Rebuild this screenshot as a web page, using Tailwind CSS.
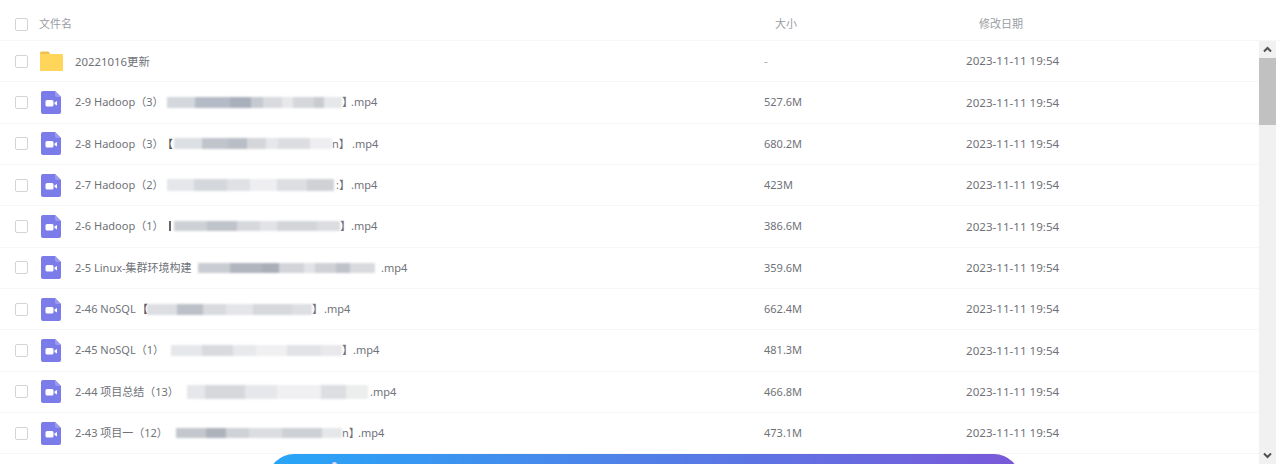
<!DOCTYPE html>
<html lang="zh">
<head>
<meta charset="utf-8">
<script src="https://cdn.jsdelivr.net/npm/@tailwindcss/browser@4"></script>
</head>
<body class="bg-white">
<div class="relative h-[464px] w-[1280px] overflow-hidden bg-white font-['Noto_Sans','Noto_Sans_CJK_SC',sans-serif] text-[11.6px] text-[#6f7278]">
  <!-- header -->
  <div class="flex h-[41px] items-center border-b border-[#f7f7f8] pt-[9px] text-[#9a9da3]">
    <span class="ml-[15px] size-[13px] rounded-[2px] border border-[#d4d4d4]"></span>
    <span class="ml-[11px] w-[736px] text-[11px]">文件名</span>
    <span class="w-[204px] text-[11px]">大小</span>
    <span class="text-[11px]">修改日期</span>
  </div>
  <div class="flex">
    <!-- rows -->
    <div class="w-[1259px]">
      <div class="flex h-[41.33px] items-center border-b border-[#f7f7f8]">
        <span class="ml-[15px] size-[13px] rounded-[2px] border border-[#d4d4d4]"></span>
        <svg class="ml-[12px] h-[20px] w-[23px]" viewBox="0 0 23 20"><path d="M0 2a1.500 1.500 0 0 1 1.500-1.500h7l2 3H0z" fill="#f0c14f"/><path d="M0 3h22a1 1 0 0 1 1 1v15a1 1 0 0 1-1 1H1a1 1 0 0 1-1-1z" fill="#ffd659"/></svg>
        <span class="ml-[12px] w-[689px] text-[11.4px]">20221016更新</span>
        <span class="w-[202px] text-[#a5a7ac]">-</span>
        <span>2023-11-11 19:54</span>
      </div>

      <div class="flex h-[41.33px] items-center border-b border-[#f7f7f8]">
        <span class="ml-[15px] size-[13px] rounded-[2px] border border-[#d4d4d4]"></span>
        <svg class="ml-[13px] h-[23px] w-[20px]" viewBox="0 0 20 23"><path d="M2 0h12l6 6v15a2 2 0 0 1-2 2H2a2 2 0 0 1-2-2V2a2 2 0 0 1 2-2z" fill="#7b7bea"/><path d="M14 0l6 6h-4a2 2 0 0 1-2-2z" fill="#9a9af0"/><rect x="4.500" y="9" width="8" height="6.500" rx="1.500" fill="#fff"/><path d="M13.500 11.500l2.500-1.500v4.500l-2.500-1.500z" fill="#fff"/></svg>
        <div class="ml-[14px] flex w-[689px] items-center text-[11px]"><span class="w-[92px] shrink-0">2-9 Hadoop（3）</span><span class="h-[11px] w-[175px] shrink-0 bg-[linear-gradient(90deg,#d4d7dc_0_16%,#b5bbc6_16%_36%,#a9b0bc_36%_48%,#c5c9d0_48%_55%,#d8dade_55%_66%,#e8e8ea_66%_72%,#d5d7db_72%_84%,#c8cbd0_84%_90%,#e6e7e9_90%_100%)] blur-[1px]"></span><span class="w-[9px] shrink-0">】</span><span>.mp4</span></div>
        <span class="w-[202px] text-[11px]">527.6M</span>
        <span>2023-11-11 19:54</span>
      </div>

      <div class="flex h-[41.33px] items-center border-b border-[#f7f7f8]">
        <span class="ml-[15px] size-[13px] rounded-[2px] border border-[#d4d4d4]"></span>
        <svg class="ml-[13px] h-[23px] w-[20px]" viewBox="0 0 20 23"><path d="M2 0h12l6 6v15a2 2 0 0 1-2 2H2a2 2 0 0 1-2-2V2a2 2 0 0 1 2-2z" fill="#7b7bea"/><path d="M14 0l6 6h-4a2 2 0 0 1-2-2z" fill="#9a9af0"/><rect x="4.500" y="9" width="8" height="6.500" rx="1.500" fill="#fff"/><path d="M13.500 11.500l2.500-1.500v4.500l-2.500-1.500z" fill="#fff"/></svg>
        <div class="ml-[14px] flex w-[689px] items-center text-[11px]"><span class="w-[87px] shrink-0">2-8 Hadoop（3）</span><span class="w-[12px] shrink-0 text-[#555]">【</span><span class="h-[11px] w-[158px] shrink-0 bg-[linear-gradient(90deg,#dcdfe3_0_18%,#c0c4cb_18%_34%,#b9bdc5_34%_46%,#d4d6da_46%_58%,#e6e7ea_58%_66%,#dbdde0_66%_86%,#eeeef0_86%_100%)] blur-[1px]"></span><span class="w-[20px] shrink-0">n】</span><span>.mp4</span></div>
        <span class="w-[202px] text-[11px]">680.2M</span>
        <span>2023-11-11 19:54</span>
      </div>

      <div class="flex h-[41.33px] items-center border-b border-[#f7f7f8]">
        <span class="ml-[15px] size-[13px] rounded-[2px] border border-[#d4d4d4]"></span>
        <svg class="ml-[13px] h-[23px] w-[20px]" viewBox="0 0 20 23"><path d="M2 0h12l6 6v15a2 2 0 0 1-2 2H2a2 2 0 0 1-2-2V2a2 2 0 0 1 2-2z" fill="#7b7bea"/><path d="M14 0l6 6h-4a2 2 0 0 1-2-2z" fill="#9a9af0"/><rect x="4.500" y="9" width="8" height="6.500" rx="1.500" fill="#fff"/><path d="M13.500 11.500l2.500-1.500v4.500l-2.500-1.500z" fill="#fff"/></svg>
        <div class="ml-[14px] flex w-[689px] items-center text-[11px]"><span class="w-[92px] shrink-0">2-7 Hadoop（2）</span><span class="h-[12px] w-[167px] shrink-0 bg-[linear-gradient(90deg,#e4e6e9_0_16%,#d4d7db_16%_36%,#dfe1e4_36%_50%,#eeeef0_50%_66%,#dcdee1_66%_84%,#cfd1d5_84%_100%)] blur-[1px]"></span><span class="w-[17px] shrink-0 pl-[2px]">:】</span><span>.mp4</span></div>
        <span class="w-[202px] text-[11px]">423M</span>
        <span>2023-11-11 19:54</span>
      </div>

      <div class="flex h-[41.33px] items-center border-b border-[#f7f7f8]">
        <span class="ml-[15px] size-[13px] rounded-[2px] border border-[#d4d4d4]"></span>
        <svg class="ml-[13px] h-[23px] w-[20px]" viewBox="0 0 20 23"><path d="M2 0h12l6 6v15a2 2 0 0 1-2 2H2a2 2 0 0 1-2-2V2a2 2 0 0 1 2-2z" fill="#7b7bea"/><path d="M14 0l6 6h-4a2 2 0 0 1-2-2z" fill="#9a9af0"/><rect x="4.500" y="9" width="8" height="6.500" rx="1.500" fill="#fff"/><path d="M13.500 11.500l2.500-1.500v4.500l-2.500-1.500z" fill="#fff"/></svg>
        <div class="ml-[14px] flex w-[689px] items-center text-[11px]"><span class="w-[94px] shrink-0">2-6 Hadoop（1）</span><span class="h-[10px] w-[2px] shrink-0 bg-[#666]"></span><span class="ml-[3px] h-[10px] w-[166px] shrink-0 bg-[linear-gradient(90deg,#cdd0d5_0_20%,#bfc3ca_20%_38%,#d6d8dc_38%_52%,#e2e3e6_52%_62%,#d3d5d9_62%_86%,#dcdde0_86%_100%)] blur-[1px]"></span><span class="w-[11px] shrink-0">】</span><span>.mp4</span></div>
        <span class="w-[202px] text-[11px]">386.6M</span>
        <span>2023-11-11 19:54</span>
      </div>

      <div class="flex h-[41.33px] items-center border-b border-[#f7f7f8]">
        <span class="ml-[15px] size-[13px] rounded-[2px] border border-[#d4d4d4]"></span>
        <svg class="ml-[13px] h-[23px] w-[20px]" viewBox="0 0 20 23"><path d="M2 0h12l6 6v15a2 2 0 0 1-2 2H2a2 2 0 0 1-2-2V2a2 2 0 0 1 2-2z" fill="#7b7bea"/><path d="M14 0l6 6h-4a2 2 0 0 1-2-2z" fill="#9a9af0"/><rect x="4.500" y="9" width="8" height="6.500" rx="1.500" fill="#fff"/><path d="M13.500 11.500l2.500-1.500v4.500l-2.500-1.500z" fill="#fff"/></svg>
        <div class="ml-[14px] flex w-[689px] items-center text-[11px]"><span class="w-[123px] shrink-0">2-5 Linux-集群环境构建</span><span class="h-[10px] w-[177px] shrink-0 bg-[linear-gradient(90deg,#c9ccd2_0_18%,#b0b5be_18%_36%,#a9aeb8_36%_46%,#d2d4d9_46%_60%,#e2e3e6_60%_66%,#cfd1d6_66%_78%,#bfc2c9_78%_86%,#d8dadd_86%_100%)] blur-[1px]"></span><span class="ml-[6px]">.mp4</span></div>
        <span class="w-[202px] text-[11px]">359.6M</span>
        <span>2023-11-11 19:54</span>
      </div>

      <div class="flex h-[41.33px] items-center border-b border-[#f7f7f8]">
        <span class="ml-[15px] size-[13px] rounded-[2px] border border-[#d4d4d4]"></span>
        <svg class="ml-[13px] h-[23px] w-[20px]" viewBox="0 0 20 23"><path d="M2 0h12l6 6v15a2 2 0 0 1-2 2H2a2 2 0 0 1-2-2V2a2 2 0 0 1 2-2z" fill="#7b7bea"/><path d="M14 0l6 6h-4a2 2 0 0 1-2-2z" fill="#9a9af0"/><rect x="4.500" y="9" width="8" height="6.500" rx="1.500" fill="#fff"/><path d="M13.500 11.500l2.500-1.500v4.500l-2.500-1.500z" fill="#fff"/></svg>
        <div class="ml-[14px] flex w-[689px] items-center text-[11px]"><span class="w-[62px] shrink-0">2-46 NoSQL</span><span class="w-[10px] shrink-0 text-[#555]">【</span><span class="h-[11px] w-[165px] shrink-0 bg-[linear-gradient(90deg,#dcdee2_0_18%,#bcc0c8_18%_34%,#d8dade_34%_48%,#e4e5e8_48%_64%,#d6d8dc_64%_88%,#dddfe2_88%_100%)] blur-[1px]"></span><span class="w-[12px] shrink-0">】</span><span>.mp4</span></div>
        <span class="w-[202px] text-[11px]">662.4M</span>
        <span>2023-11-11 19:54</span>
      </div>

      <div class="flex h-[41.33px] items-center border-b border-[#f7f7f8]">
        <span class="ml-[15px] size-[13px] rounded-[2px] border border-[#d4d4d4]"></span>
        <svg class="ml-[13px] h-[23px] w-[20px]" viewBox="0 0 20 23"><path d="M2 0h12l6 6v15a2 2 0 0 1-2 2H2a2 2 0 0 1-2-2V2a2 2 0 0 1 2-2z" fill="#7b7bea"/><path d="M14 0l6 6h-4a2 2 0 0 1-2-2z" fill="#9a9af0"/><rect x="4.500" y="9" width="8" height="6.500" rx="1.500" fill="#fff"/><path d="M13.500 11.500l2.500-1.500v4.500l-2.500-1.500z" fill="#fff"/></svg>
        <div class="ml-[14px] flex w-[689px] items-center text-[11px]"><span class="w-[96px] shrink-0">2-45 NoSQL（1）</span><span class="h-[11px] w-[171px] shrink-0 bg-[linear-gradient(90deg,#e6e7ea_0_18%,#d8dade_18%_36%,#e8e9eb_36%_50%,#f0f0f2_50%_68%,#e2e3e6_68%_88%,#e9e9ec_88%_100%)] blur-[1px]"></span><span class="w-[11px] shrink-0">】</span><span>.mp4</span></div>
        <span class="w-[202px] text-[11px]">481.3M</span>
        <span>2023-11-11 19:54</span>
      </div>

      <div class="flex h-[41.33px] items-center border-b border-[#f7f7f8]">
        <span class="ml-[15px] size-[13px] rounded-[2px] border border-[#d4d4d4]"></span>
        <svg class="ml-[13px] h-[23px] w-[20px]" viewBox="0 0 20 23"><path d="M2 0h12l6 6v15a2 2 0 0 1-2 2H2a2 2 0 0 1-2-2V2a2 2 0 0 1 2-2z" fill="#7b7bea"/><path d="M14 0l6 6h-4a2 2 0 0 1-2-2z" fill="#9a9af0"/><rect x="4.500" y="9" width="8" height="6.500" rx="1.500" fill="#fff"/><path d="M13.500 11.500l2.500-1.500v4.500l-2.500-1.500z" fill="#fff"/></svg>
        <div class="ml-[14px] flex w-[689px] items-center text-[11px]"><span class="w-[112px] shrink-0">2-44 项目总结（13）</span><span class="h-[14px] w-[181px] shrink-0 bg-[linear-gradient(90deg,#e6e7ea_0_10%,#d6d8dc_10%_32%,#e6e7ea_32%_50%,#f0f0f2_50%_74%,#dcdee1_74%_88%,#eceded_88%_100%)] blur-[1px]"></span><span class="ml-[2px]">.mp4</span></div>
        <span class="w-[202px] text-[11px]">466.8M</span>
        <span>2023-11-11 19:54</span>
      </div>

      <div class="flex h-[41.33px] items-center border-b border-[#f7f7f8]">
        <span class="ml-[15px] size-[13px] rounded-[2px] border border-[#d4d4d4]"></span>
        <svg class="ml-[13px] h-[23px] w-[20px]" viewBox="0 0 20 23"><path d="M2 0h12l6 6v15a2 2 0 0 1-2 2H2a2 2 0 0 1-2-2V2a2 2 0 0 1 2-2z" fill="#7b7bea"/><path d="M14 0l6 6h-4a2 2 0 0 1-2-2z" fill="#9a9af0"/><rect x="4.500" y="9" width="8" height="6.500" rx="1.500" fill="#fff"/><path d="M13.500 11.500l2.500-1.500v4.500l-2.500-1.500z" fill="#fff"/></svg>
        <div class="ml-[14px] flex w-[689px] items-center text-[11px]"><span class="w-[101px] shrink-0">2-43 项目一（12）</span><span class="h-[10px] w-[166px] shrink-0 bg-[linear-gradient(90deg,#c4c7cd_0_18%,#aeb2bb_18%_30%,#cfd2d7_30%_44%,#dcdde1_44%_64%,#cdd0d5_64%_88%,#e6e7e9_88%_100%)] blur-[1px]"></span><span class="w-[16px] shrink-0">n】</span><span>.mp4</span></div>
        <span class="w-[202px] text-[11px]">473.1M</span>
        <span>2023-11-11 19:54</span>
      </div>
    </div>
    <!-- scrollbar -->
    <div class="flex h-[423px] w-[17px] flex-col bg-[#f1f1f1]">
      <div class="flex h-[17px] items-center justify-center"><svg class="size-[9px]" viewBox="0 0 9 9"><path d="M1 6.500L4.500 3 8 6.500" fill="none" stroke="#505050" stroke-width="2"/></svg></div>
      <div class="h-[67px] bg-[#c1c1c1]"></div>
      <div class="flex-1"></div>
      <div class="flex h-[17px] items-center justify-center"><svg class="size-[9px]" viewBox="0 0 9 9"><path d="M1 2.500L4.500 6 8 2.500" fill="none" stroke="#505050" stroke-width="2"/></svg></div>
    </div>
  </div>
  <!-- floating banner -->
  <div class="absolute left-[268px] top-[454px] h-[40px] w-[752px] rounded-t-[26px] bg-[linear-gradient(90deg,#27a6f8,#7a58d8)]">
    <span class="absolute left-[64px] top-[8px] h-[3px] w-[5px] rounded-t-full bg-[#e8d8f0]"></span>
  </div>
</div>
</body>
</html>
